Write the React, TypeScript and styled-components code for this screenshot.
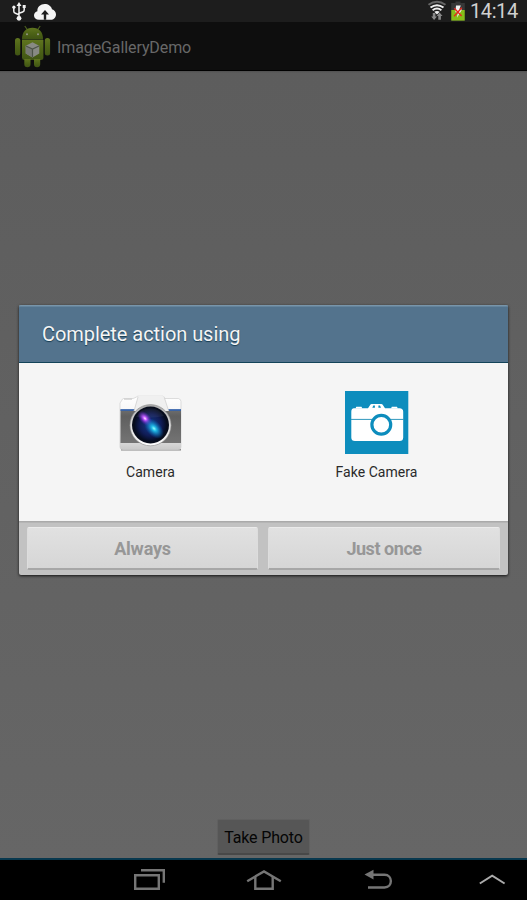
import styled, { createGlobalStyle } from 'styled-components';

const App = () => (
  <Screen>
    <GlobalStyle />
    <StatusBar>
      <UsbIcon />
      <CloudIcon />
      <Spacer />
      <WifiIcon />
      <BatteryIcon />
      <Clock>14:14</Clock>
    </StatusBar>
    <ActionBar>
      <AndroidIcon />
      <AppTitle>ImageGalleryDemo</AppTitle>
    </ActionBar>
    <Content>
      <PhotoButton type="button">Take Photo</PhotoButton>
    </Content>
    <NavBar>
      <NavIcons />
    </NavBar>
    <Overlay>
      <Dialog role="dialog" aria-label="Complete action using">
        <DialogHeader>Complete action using</DialogHeader>
        <DialogBody>
          <Choice>
            <CameraIcon />
            <ChoiceName $spacing="0.1px">Camera</ChoiceName>
          </Choice>
          <Choice>
            <FakeCameraIcon />
            <ChoiceName $spacing="0.05px">Fake Camera</ChoiceName>
          </Choice>
        </DialogBody>
        <DialogFooter>
          <DialogButton disabled $spacing="-0.2px">
            Always
          </DialogButton>
          <DialogButton disabled $spacing="-0.45px">
            Just once
          </DialogButton>
        </DialogFooter>
      </Dialog>
    </Overlay>
  </Screen>
);

const UsbIcon = () => (
  <svg width="34" height="22" viewBox="0 0 34 22" fill="none" stroke="#f2f2f2" strokeWidth="1.5">
    <path d="M19 4v14M13.8 8v3.2q0 1.6 1.6 2l3.6 1.5M24.2 7v3q0 1.6-1.6 2L19 13.3" />
    <path d="M19 2l2.5 4h-5z" fill="#f2f2f2" stroke="none" />
    <circle cx="19" cy="18.3" r="2.4" fill="#f2f2f2" stroke="none" />
    <circle cx="13.9" cy="7.2" r="1.6" fill="#f2f2f2" stroke="none" />
    <path d="M22.7 5h3v3h-3z" fill="#f2f2f2" stroke="none" />
  </svg>
);

const CloudIcon = () => (
  <svg width="22" height="22" viewBox="34 0 22 22">
    <path
      d="M39 19.8c-3 0-5-1.8-5-4.3 0-2.2 1.5-3.8 3.4-4.2C37 7 40.6 4 44.7 4c3.5 0 6.5 2 7.3 5.3 2.4.6 4 2.7 4 5.1 0 3-2.3 5.4-5.4 5.4z"
      fill="#f4f4f4"
    />
    <path d="M45 10l4 4.5h-2.8v5.3h-2.4v-5.3H41z" fill="#1d1d1d" />
  </svg>
);

const WifiIcon = () => (
  <svg width="22" height="22" viewBox="427 0 22 22" fill="none">
    <path d="M428.5 4.8q8.5-6.2 17 0" stroke="#666" strokeWidth="1.9" />
    <path d="M430.5 7.6q6.5-4.8 13 0M432.6 10.2q4.4-3.3 8.8 0" stroke="#eee" strokeWidth="1.9" />
    <path d="M434.3 11.8q2.7-1.8 5.4 0L437 14.5z" fill="#eee" />
    <path d="M432.8 13h2.6v3.4h1.6l-2.9 3.6-2.9-3.6h1.6zM439.6 12.6l2.9 3.5h-1.6v3.6h-2.6v-3.6h-1.6z" fill="#888" />
  </svg>
);

const BatteryIcon = () => (
  <svg width="18" height="22" viewBox="449 0 18 22">
    <path d="M455.5 1.5h5V3h4.3v17.7h-13.6V3h4.3z" fill="#373737" />
    <path d="M451.3 10h13.4v10.6h-13.4z" fill="#86bd18" />
    <path d="M456 5.5h4.8l-1.5 4h2.8l-5.2 8.3 1-5.5h-2.5z" fill="#f1f1f1" />
    <path d="M454.3 8.2l7.3 7.7M461.8 7.7l-7.7 8.6" stroke="#e52920" strokeWidth="1.4" />
  </svg>
);

const AndroidIcon = () => (
  <svg width="36" height="44" viewBox="15 24 36 44">
    <defs>
      <linearGradient id="robot" x2="0" y2="1">
        <stop stopColor="#5f741f" />
        <stop offset=".5" stopColor="#4d6316" />
        <stop offset="1" stopColor="#405414" />
      </linearGradient>
    </defs>
    <path d="M24.8 26l3.1 4.5M40.2 26l-3.1 4.5" stroke="#4b5e20" strokeWidth="1.2" />
    <g fill="url(#robot)">
      <path d="M22 39c0-7 4-11.2 10.5-11.2S43 32 43 39z" />
      <path d="M22 40h21.4v17.5q0 2.5-2.5 2.5H24.4Q22 60 22 57.5z" />
      <rect x="15" y="38" width="5.3" height="17.5" rx="2.5" />
      <rect x="44.8" y="38" width="5.3" height="17.5" rx="2.5" />
      <path d="M24.3 59h6.2v5.2q0 3-3.1 3t-3.1-3zM34 59h6.2v5.2q0 3-3.1 3t-3.1-3z" />
    </g>
    <path d="M22 39.5h21" stroke="#36451a" strokeWidth=".8" />
    <circle cx="27" cy="34.3" r="1" fill="#929588" />
    <circle cx="38" cy="34.3" r="1" fill="#929588" />
    <path d="M32.5 42.2l6.8 3.6v7.6l-6.8 4-6.8-4v-7.6z" fill="#888a84" />
    <path d="M25.7 45.8l6.8 3.2v8.4l-6.8-4z" fill="#777974" />
    <path d="M26 46l6.5 3 6.5-3M32.5 49v8" stroke="#4d5448" strokeWidth="1.2" fill="none" />
  </svg>
);

const CameraIcon = () => (
  <svg width="64" height="64" viewBox="119 391 64 64">
    <defs>
      <linearGradient id="silver" x2="0" y2="1">
        <stop stopColor="#fff" />
        <stop offset=".7" stopColor="#ececec" />
        <stop offset="1" stopColor="#c9c9c9" />
      </linearGradient>
      <linearGradient id="rim" x2="0" y2="1">
        <stop stopColor="#aaa" />
        <stop offset=".5" stopColor="#ddd" />
        <stop offset="1" stopColor="#fff" />
      </linearGradient>
      <linearGradient id="grip" x2="0" y2="1">
        <stop stopColor="#6e6e6e" />
        <stop offset=".2" stopColor="#5f5f5f" />
        <stop offset="1" stopColor="#747474" />
      </linearGradient>
      <radialGradient id="lens">
        <stop stopColor="#143d8e" />
        <stop offset=".65" stopColor="#101c56" />
        <stop offset="1" stopColor="#050b1c" />
      </radialGradient>
      <radialGradient id="violet">
        <stop stopColor="#fff0ff" />
        <stop offset=".25" stopColor="#c456ff" />
        <stop offset="1" stopColor="#5010c0" stopOpacity="0" />
      </radialGradient>
      <radialGradient id="cyan">
        <stop stopColor="#8fffff" />
        <stop offset=".25" stopColor="#20b9e5" />
        <stop offset="1" stopColor="#0566ba" stopOpacity="0" />
      </radialGradient>
    </defs>
    <path d="M121 449.7h60" stroke="#888" strokeWidth="1.4" />
    <path
      d="M122 400q0-1 1.5-1.5h9.7l3.1-1.4q.7-.9 2-.9h24.4q1.6 0 2.2 2.3h13.4q2.7.7 2.7 3V447q0 2.5-2.5 2.5h-56q-2.5 0-2.5-2.5v-44z"
      fill="url(#silver)"
      stroke="#d0d0d0"
      strokeWidth=".7"
    />
    <path d="M120.5 409.5H181V443h-60.5z" fill="url(#grip)" />
    <path d="M120.5 410H181" stroke="#2b61b6" strokeWidth="1.3" />
    <path d="M134 411l4-14q.3-1 1.5-1h23q1.4 0 1.8 1.5l4.4 13.5z" fill="#f0f0f0" />
    <path d="M134 411l4-14M168.7 411l-4.4-13.5" stroke="#ccc" strokeWidth=".7" />
    <path d="M124 398.2h8v1.5h-8z" fill="#d0d0d0" />
    <circle cx="150.5" cy="425.2" r="20.6" fill="url(#rim)" stroke="#888" strokeWidth=".6" />
    <circle cx="150.5" cy="425" r="18.5" fill="#070c1c" />
    <circle cx="150.5" cy="425" r="16.5" fill="url(#lens)" />
    <ellipse cx="145" cy="418.5" rx="9" ry="5.5" transform="rotate(48 145 418.5)" fill="url(#violet)" />
    <ellipse cx="154" cy="428.5" rx="12" ry="7.5" transform="rotate(48 154 428.5)" fill="url(#cyan)" />
    <path d="M136 417a16 16 0 0 1 28-1q-11 3-28 1z" fill="#fff" opacity=".06" />
  </svg>
);

const FakeCameraIcon = () => (
  <svg width="64" height="64" viewBox="345 391 64 64">
    <path d="M345 391h63.3v63H345z" fill="#0d8dbd" />
    <path
      d="M354 408.3h14l2.3-3.5q.4-.8 1.4-.8h9.6q1 0 1.4.8l2.3 3.5h14.5q3.7 0 3.7 3.5v25.7q0 3.5-3.7 3.5H355q-3.7 0-3.7-3.5v-25.7q0-3.2 2.7-3.5z"
      fill="#fff"
    />
    <path d="M355.5 408.5l.8-1.8h5.2l.8 1.8zM391 408.5l.8-1.8h5.2l.8 1.8z" fill="#fff" />
    <path d="M372.3 407.8l1-2.2h1.6v2.2M381 407.8l-1-2.2h-1.6v2.2" fill="#0d8dbd" />
    <path d="M351 419.4h53" stroke="#3098bd" />
    <circle cx="381.3" cy="424.7" r="9.4" fill="#fff" stroke="#0d8dbd" strokeWidth="3.2" />
  </svg>
);

const NavIcons = () => (
  <svg width="527" height="40" viewBox="0 860 527 40" fill="none" stroke="#757575" strokeWidth="2.4">
    <path d="M135.2 875.2h23.6v13.6h-23.6zM141 870.3h22.8v12.4" />
    <path d="M247.2 881.2l16.8-9.8 16.8 9.8" />
    <path d="M255.3 877v11.7h17.4V877" />
    <path d="M364.5 874.6l9-4.8v9.6z" fill="#757575" stroke="none" />
    <path d="M372 874.7h12.5c8.5 0 8.5 12.8 0 12.8H368" />
    <path d="M479.8 883.5l12.4-7.9 12.4 7.9" stroke="#aaa" strokeWidth="2" />
  </svg>
);

const GlobalStyle = createGlobalStyle`
  body {
    margin: 0;
    font-family: Roboto, sans-serif;
  }
  * {
    box-sizing: border-box;
  }
`;

const Screen = styled.div`
  width: 527px;
  height: 900px;
  display: flex;
  flex-direction: column;
  position: relative;
  overflow: hidden;
  svg {
    flex-shrink: 0;
  }
`;

const StatusBar = styled.div`
  height: 22px;
  display: flex;
  padding-right: 9px;
  background: #1d1d1d;
`;

const Spacer = styled.div`
  flex: 1;
`;

const Clock = styled.div`
  width: 51px;
  padding-left: 3px;
  font-size: 20px;
  line-height: 22px;
  white-space: nowrap;
  letter-spacing: -0.4px;
  color: #d0d0d0;
`;

const ActionBar = styled.div`
  height: 49px;
  display: flex;
  align-items: center;
  padding-left: 15px;
  background: #0e0e0e;
  border-bottom: 1px solid #000;
`;

const AppTitle = styled.div`
  margin: 2px 0 0 6px;
  font-size: 16px;
  letter-spacing: -0.1px;
  color: #686868;
`;

const Content = styled.div`
  flex: 1;
  display: flex;
  align-items: flex-end;
  justify-content: center;
  padding-bottom: 3px;
  background: linear-gradient(#505050, #5d5d5d 2px, #666);
`;

const PhotoButton = styled.button`
  width: 93px;
  height: 36px;
  padding: 1px 0 0;
  border: 1px solid #606060;
  border-bottom: 2px solid #484848;
  border-radius: 2px;
  background: #565656;
  font: 16px Roboto, sans-serif;
  letter-spacing: -0.15px;
  color: #050505;
`;

const NavBar = styled.div`
  height: 42px;
  border-top: 2px solid #08384e;
  background: #000;
`;

const Overlay = styled.div`
  position: absolute;
  inset: 0;
  display: flex;
  justify-content: center;
  align-items: flex-start;
  padding-top: 305px;
`;

const Dialog = styled.div`
  width: 489px;
  height: 270px;
  display: flex;
  flex-direction: column;
  overflow: hidden;
  border-radius: 2px;
  background: #c2c2c2;
  box-shadow: 0 1px 3px rgba(0, 0, 0, 0.8);
`;

const DialogHeader = styled.div`
  height: 58px;
  padding-left: 23px;
  border-top: 1px solid #7895aa;
  border-bottom: 1px solid #134359;
  background: #53738d;
  box-shadow: inset 0 1px #64849c;
  font-size: 20px;
  line-height: 57px;
  letter-spacing: -0.05px;
  color: #f5f5f5;
  text-shadow: 0 1px 1px #173c51;
`;

const DialogBody = styled.div`
  height: 158px;
  display: grid;
  grid-template-columns: 226px 226px;
  justify-content: center;
  padding-top: 28px;
  background: #f5f5f5;
`;

const Choice = styled.div`
  display: flex;
  flex-direction: column;
  align-items: center;
`;

const ChoiceName = styled.div<{ $spacing: string }>`
  margin-top: 8px;
  font-size: 14px;
  line-height: 18px;
  letter-spacing: ${({ $spacing }) => $spacing};
  color: #2a2a2a;
`;

const DialogFooter = styled.div`
  flex: 1;
  display: grid;
  grid-template-columns: 231px 232px;
  gap: 10px;
  padding: 5px 8px;
  border-top: 1px solid #aaa;
  box-shadow: inset 0 1px #b5b5b5;
`;

const DialogButton = styled.button<{ $spacing: string }>`
  height: 43px;
  padding: 0;
  border: 1px solid #ddd;
  border-top-color: #ebebeb;
  border-bottom: 2px solid #a7a7a7;
  border-radius: 2px;
  background: linear-gradient(#e1e1e1, #d6d6d6);
  font: bold 18px Roboto, sans-serif;
  letter-spacing: ${({ $spacing }) => $spacing};
  color: #979797;
`;

export default App;
